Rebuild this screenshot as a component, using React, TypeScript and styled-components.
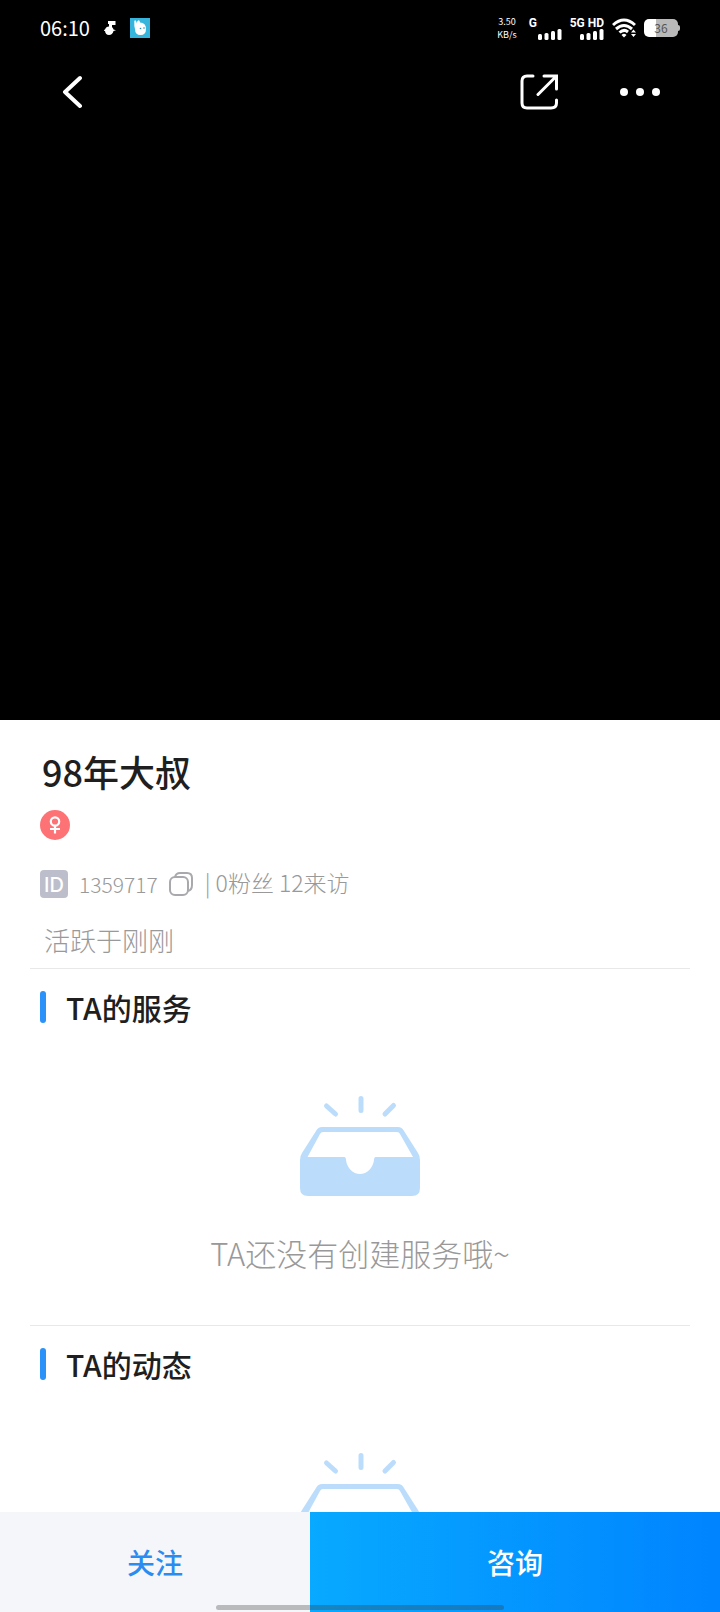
import React from 'react';
import styled, { createGlobalStyle } from 'styled-components';

const GlobalStyle = createGlobalStyle`
  * { box-sizing: border-box; }
  body {
    margin: 0;
    background: #fff;
    color: #1f1f1f;
    font-family: "Noto Sans CJK SC", "Noto Sans", sans-serif;
  }
  h1, h2, p { margin: 0; font-weight: 400; }
  button { border: 0; padding: 0; background: none; font: inherit; color: inherit; cursor: pointer; }
  svg { display: block; flex: none; }
`;

const Screen = styled.div`
  display: flex;
  flex-direction: column;
  height: 100vh;
  overflow: hidden;
`;

const Scroller = styled.main`
  flex: 1;
  min-height: 0;
  overflow-y: auto;
  scrollbar-width: none;
`;

const Hero = styled.header`
  aspect-ratio: 1;
  background: #000;
  color: #fff;
`;

const StatusBar = styled.div`
  display: flex;
  align-items: center;
  justify-content: space-between;
  height: 56px;
  padding: 0 40px;
`;

const StatusGroup = styled.div<{ $gap: number }>`
  display: flex;
  align-items: center;
  gap: ${({ $gap }) => $gap}px;
`;

const Clock = styled.time`
  font-size: 20px;
  line-height: 24px;
`;

const Speed = styled.div`
  display: flex;
  flex-direction: column;
  align-items: center;
  margin-right: 4px;
  font-size: 9px;
  line-height: 13px;
`;

const Cell = styled.div`
  display: flex;
  flex-direction: column;
  align-items: flex-end;
  min-width: 33px;
  font: 700 12px/12px Roboto, sans-serif;
`;

const CellLabel = styled.span`
  align-self: flex-start;
`;

const Battery = styled.div`
  display: flex;
  align-items: center;
`;

const BatteryBody = styled.div`
  width: 34px;
  height: 18px;
  border-radius: 5px;
  background: linear-gradient(90deg, #fff 36%, #b9b9b9 36%);
  color: #555;
  font-size: 12px;
  line-height: 18px;
  text-align: center;
`;

const BatteryTip = styled.div`
  width: 2px;
  height: 6px;
  border-radius: 0 2px 2px 0;
  background: #b9b9b9;
`;

const NavBar = styled.nav`
  display: flex;
  align-items: center;
  justify-content: space-between;
  height: 72px;
  padding: 0 56px 0 48px;
`;

const NavActions = styled.div`
  display: flex;
  gap: 53px;
`;

const IconButton = styled.button`
  display: grid;
  place-items: center;
  width: 48px;
  height: 48px;
`;

const Profile = styled.section`
  padding: 28px 40px 8px;
`;

const Name = styled.h1`
  padding-left: 2px;
  font-size: 36px;
  line-height: 46px;
  font-weight: 500;
`;

const Gender = styled.div`
  display: grid;
  place-items: center;
  width: 30px;
  height: 30px;
  margin-top: 16px;
  border-radius: 50%;
  background: #fd7275;
`;

const Meta = styled.div`
  display: flex;
  align-items: center;
  height: 40px;
  margin-top: 24px;
  color: #999;
  font-weight: 300;
`;

const IdBadge = styled.span`
  width: 28px;
  height: 28px;
  border-radius: 4px;
  background: #bdbecb;
  color: #fff;
  font: 500 20px/30px Inter, sans-serif;
  text-align: center;
`;

const IdNumber = styled.span`
  margin-left: 11px;
  font-size: 21px;
  line-height: 40px;
`;

const CopyButton = styled.button`
  margin-left: 11px;
`;

const Stats = styled.span`
  margin-left: 12px;
  padding-bottom: 4px;
  font-size: 23px;
  line-height: 36px;
`;

const LastActive = styled.p`
  margin-top: 16px;
  padding-left: 4px;
  color: #999;
  font-size: 26px;
  font-weight: 300;
  line-height: 40px;
`;

const Section = styled.section`
  margin: 0 30px;
  padding: 22px 10px 52px;
  border-top: 1px solid #e8e8e8;
`;

const SectionTitle = styled.h2`
  display: flex;
  align-items: center;
  gap: 20px;
  height: 32px;
  font-size: 30px;
  font-weight: 500;
  line-height: 28px;

  &::before {
    content: "";
    width: 6px;
    height: 32px;
    border-radius: 3px;
    background: #2a92f8;
  }
`;

const Empty = styled.div`
  display: flex;
  flex-direction: column;
  align-items: center;
  gap: 37px;
  padding-top: 73px;
`;

const EmptyText = styled.p`
  color: #999;
  font-size: 31px;
  font-weight: 300;
  line-height: 40px;
`;

const ActionBar = styled.footer`
  display: flex;
  position: relative;
  height: 100px;
`;

const Action = styled.button<{ $primary?: boolean }>`
  flex: ${({ $primary }) => ($primary ? 41 : 31)} 1 0;
  background: ${({ $primary }) => ($primary ? 'linear-gradient(90deg, #08a9ff, #0084ff)' : '#f4f6fa')};
  color: ${({ $primary }) => ($primary ? '#fff' : '#2a8cf0')};
  font-size: 28px;
  font-weight: 500;
  line-height: 40px;
`;

const HomeIndicator = styled.div`
  position: absolute;
  left: 30%;
  right: 30%;
  bottom: 2px;
  height: 5px;
  border-radius: 3px;
  background: rgba(60, 60, 60, 0.32);
  pointer-events: none;
`;

const SignalBars = () => (
  <svg width="24" height="11" viewBox="0 0 24 11" fill="#fff" aria-hidden="true">
    <rect x="0" y="5" width="4" height="6" rx="1.5" />
    <rect x="6.5" y="4" width="4" height="7" rx="1.5" />
    <rect x="13" y="2" width="4" height="9" rx="1.5" />
    <rect x="19.5" y="0" width="4" height="11" rx="1.5" />
  </svg>
);

const TrayIcon = () => (
  <svg width="120" height="100" viewBox="0 0 120 100" fill="none" aria-hidden="true">
    <g stroke="#bbddfb" strokeWidth="5" strokeLinecap="round">
      <path d="M26.500 10 35.500 18M61 2.500V14.500M93.500 9.500 85 18" />
    </g>
    <path
      fill="#bbddfb"
      fillRule="evenodd"
      d="M22 31H98Q102 31 104 35L118 57Q120 60 120 64V92Q120 100 112 100H8Q0 100 0 92V64Q0 60 2 57L16 35Q18 31 22 31ZM23 36Q21 36 20 38L7.500 61H44Q46 61 46 64C47 72 53 78 60 78S73 72 74 64Q74 61 76 61H113L100 38Q99 36 97 36Z"
    />
  </svg>
);

const EmptySection = ({ title, message }: { title: string; message?: string }) => (
  <Section>
    <SectionTitle>{title}</SectionTitle>
    <Empty>
      <TrayIcon />
      {message && <EmptyText>{message}</EmptyText>}
    </Empty>
  </Section>
);

export default function App() {
  return (
    <Screen>
      <GlobalStyle />
      <Scroller>
        <Hero>
          <StatusBar>
            <StatusGroup $gap={14}>
              <Clock>06:10</Clock>
              <svg width="12" height="16" viewBox="0 0 12 16" fill="#fff" aria-hidden="true">
                <path d="M4 1H11.500V5H8V7Q9.500 8.500 9.500 9.500L12 10.300 9.500 11Q8.500 15 5 15 1.500 15 1 11L-1 10.300 1 9.500Q2 6.500 5 6.500V4H4Z" />
              </svg>
              <svg width="20" height="20" viewBox="0 0 20 20" aria-hidden="true">
                <path fill="#35b5dc" d="M0 0H20V20H0Z" />
                <path fill="#fff" d="M4.300 3Q5.500 1 6.500 4V5.500L7.500 3Q9.500 1 10 4.600Q16 5 16 11 16 17 10.500 17 5 17 5 11Q4 8 4.300 3Z" />
                <circle cx="10.500" cy="10.500" r=".8" fill="#258db5" />
                <circle cx="14" cy="10" r=".8" fill="#258db5" />
              </svg>
            </StatusGroup>
            <StatusGroup $gap={8}>
              <Speed>
                <span>3.50</span>
                <span>KB/s</span>
              </Speed>
              <Cell>
                <CellLabel>G</CellLabel>
                <SignalBars />
              </Cell>
              <Cell>
                <CellLabel>5G HD</CellLabel>
                <SignalBars />
              </Cell>
              <svg width="24" height="20" viewBox="0 0 24 20" fill="none" stroke="#fff" strokeWidth="3" aria-hidden="true">
                <path d="M1 7Q12-3 23 7M4 11Q12 4 20 11M7.500 14.500Q12 10.500 16 14" />
                <path d="M9.500 17Q12 14.500 14.500 17L12 19.500Z" fill="#fff" stroke="none" />
                <path d="M19 14.500 21.500 11.500 24 14.500ZM19 16H24L21.500 19Z" fill="#fff" stroke="none" />
              </svg>
              <Battery>
                <BatteryBody>36</BatteryBody>
                <BatteryTip />
              </Battery>
            </StatusGroup>
          </StatusBar>
          <NavBar>
            <IconButton aria-label="返回">
              <svg width="20" height="34" viewBox="0 0 20 34" fill="none" stroke="#fff" strokeWidth="4" strokeLinecap="round" strokeLinejoin="round">
                <path d="M18 3 3 17 18 31" />
              </svg>
            </IconButton>
            <NavActions>
              <IconButton aria-label="分享">
                <svg width="38" height="36" viewBox="0 0 38 36" fill="none" stroke="#fff" strokeWidth="3" strokeLinecap="round">
                  <path d="M13 2H7Q2 2 2 7V29Q2 34 7 34H31Q36.500 34 36.500 29V26M24 2H36.500V15M36 2.500 18 20.500" />
                </svg>
              </IconButton>
              <IconButton aria-label="更多">
                <svg width="40" height="8" viewBox="0 0 40 8" fill="#fff">
                  <circle cx="4" cy="4" r="4" />
                  <circle cx="20" cy="4" r="4" />
                  <circle cx="36" cy="4" r="4" />
                </svg>
              </IconButton>
            </NavActions>
          </NavBar>
        </Hero>

        <Profile>
          <Name>98年大叔</Name>
          <Gender role="img" aria-label="女">
            <svg width="12" height="18" viewBox="0 0 12 18" fill="none" stroke="#fff" strokeWidth="2.200">
              <circle cx="6" cy="5.500" r="4.200" />
              <path d="M6 9.700V17.500M1 13H11" />
            </svg>
          </Gender>
          <Meta>
            <IdBadge>ID</IdBadge>
            <IdNumber>1359717</IdNumber>
            <CopyButton aria-label="复制ID">
              <svg width="24" height="24" viewBox="0 0 24 24" fill="none" stroke="#a9a9ad" strokeWidth="2">
                <rect x="1" y="5" width="18" height="18" rx="5" />
                <path d="M6 5Q7 1 11 1H18Q23 1 23 6V13Q23 18 19 19" />
              </svg>
            </CopyButton>
            <Stats>| 0粉丝 12来访</Stats>
          </Meta>
          <LastActive>活跃于刚刚</LastActive>
        </Profile>

        <EmptySection title="TA的服务" message="TA还没有创建服务哦~" />
        <EmptySection title="TA的动态" />
      </Scroller>
      <ActionBar>
        <Action>关注</Action>
        <Action $primary>咨询</Action>
        <HomeIndicator />
      </ActionBar>
    </Screen>
  );
}
